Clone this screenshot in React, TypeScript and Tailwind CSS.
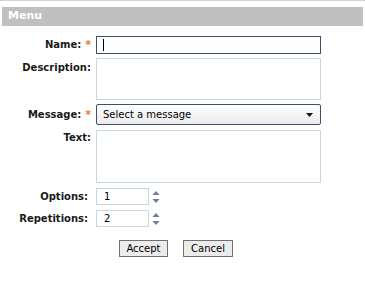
const labelCls =
  "w-[91px] shrink-0 text-right text-[10px] font-bold text-[#1a1a1a] leading-[12px]";

function Star() {
  return <span className="text-[#e07b1f] ml-[4px] text-[11px]">*</span>;
}

function Spinner() {
  return (
    <svg width="8" height="14" viewBox="0 0 8 14" className="ml-[3px]">
      <polygon points="4,1 7.5,5 0.5,5" fill="#6b7f99" />
      <polygon points="0.5,9 7.5,9 4,13" fill="#6b7f99" />
    </svg>
  );
}

export default function App() {
  return (
    <div className="w-[365px] h-[305px] bg-white font-['DejaVu_Sans',Verdana,sans-serif] relative">
      <div className="h-px bg-[#d4d4d4]" />
      <div className="mx-[2px] mt-[6px] h-[19px] bg-[#c0c0c0] flex items-center px-[6px]">
        <span className="text-white font-bold text-[11px]">Menu</span>
      </div>

      <div className="mt-[10px] flex flex-col">
        {/* Name */}
        <div className="flex items-center h-[18px]">
          <div className={labelCls}>
            Name:<Star />
          </div>
          <div className="ml-[5px] w-[225px] h-[18px] border border-[#3d4f6b] flex items-center pl-[6px]">
            <div className="w-px h-[12px] bg-black" />
          </div>
        </div>

        {/* Description */}
        <div className="flex mt-[4px]">
          <div className={labelCls + " pt-[4px]"}>Description:</div>
          <div className="ml-[5px] w-[225px] h-[42px] border border-[#c6d6e6]" />
        </div>

        {/* Message */}
        <div className="flex items-center mt-[4px]">
          <div className={labelCls}>
            Message:<Star />
          </div>
          <div className="ml-[5px] w-[225px] h-[21px] border border-[#3d4f6b] rounded-[2px] bg-gradient-to-b from-white to-[#ebebeb] flex items-center justify-between pl-[6px] pr-[7px] text-[10px] text-black">
            <span>Select a message</span>
            <svg width="7" height="4" viewBox="0 0 7 4">
              <polygon points="0,0 7,0 3.5,4" fill="#111" />
            </svg>
          </div>
        </div>

        {/* Text */}
        <div className="flex mt-[5px]">
          <div className={labelCls + " pt-[2px]"}>Text:</div>
          <div className="ml-[5px] w-[225px] h-[53px] border border-[#c6d6e6]" />
        </div>

        {/* Options */}
        <div className="flex items-center mt-[5px]">
          <div className={labelCls + " pr-[3px]"}>Options:</div>
          <div className="ml-[5px] w-[53px] h-[17px] border border-[#c6d6e6] flex items-center pl-[7px] text-[10px] text-black">
            1
          </div>
          <Spinner />
        </div>

        {/* Repetitions */}
        <div className="flex items-center mt-[5px]">
          <div className={labelCls + " pr-[3px]"}>Repetitions:</div>
          <div className="ml-[5px] w-[53px] h-[17px] border border-[#c6d6e6] flex items-center pl-[7px] text-[10px] text-black">
            2
          </div>
          <Spinner />
        </div>

        <div className="flex mt-[13px] pl-[119px] gap-[15px]">
          <button className="w-[49px] h-[17px] border border-[#707070] bg-[#ececec] text-[10px] text-black flex items-center justify-center">
            Accept
          </button>
          <button className="w-[50px] h-[17px] border border-[#707070] bg-[#ececec] text-[10px] text-black flex items-center justify-center">
            Cancel
          </button>
        </div>
      </div>
    </div>
  );
}
